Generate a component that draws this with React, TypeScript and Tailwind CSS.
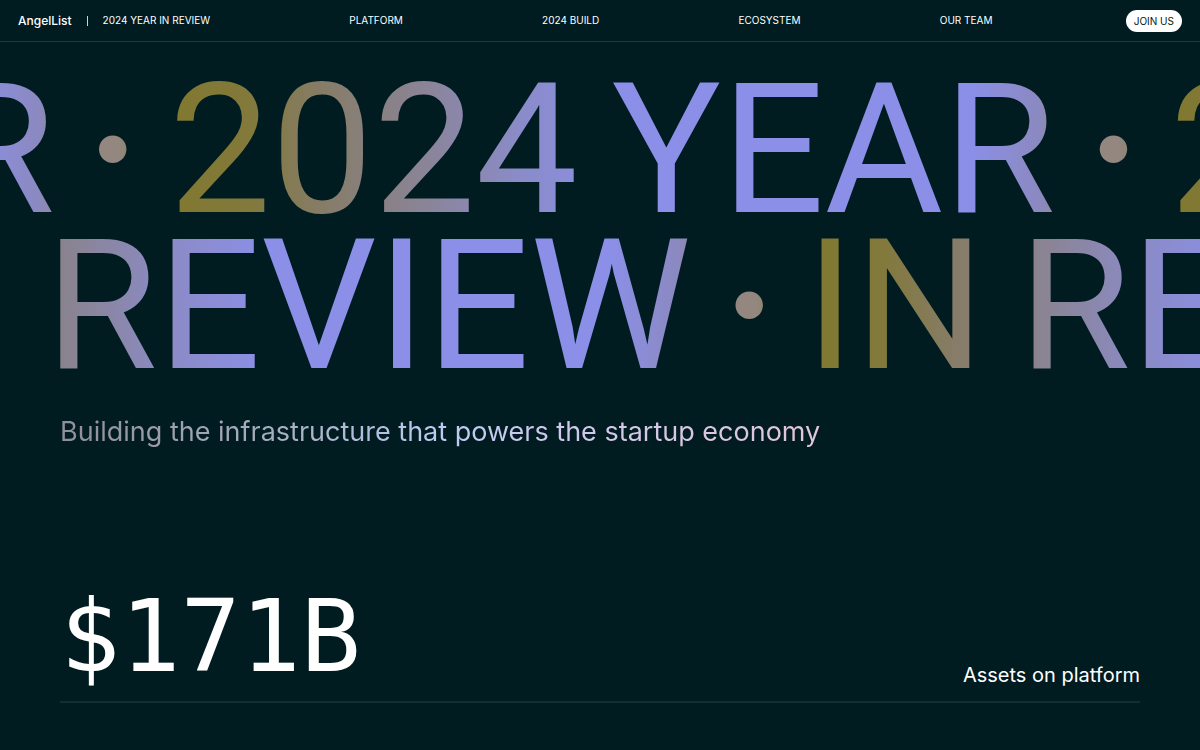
import React from 'react';

const navLinks = [
  { label: 'Platform', href: '#platform' },
  { label: '2024 Build', href: '#build' },
  { label: 'Ecosystem', href: '#ecosystem' },
  { label: 'Our Team', href: '#team' },
];

const stats = [{ value: '$171B', label: 'Assets on platform' }];

interface MarqueeRowProps {
  words: string[];
  className: string;
}

function MarqueeRow({ words, className }: MarqueeRowProps) {
  return (
    <div className="overflow-hidden">
      <div className={`flex w-max ${className}`}>
        {[0, 1, 2].map((i) => (
          <div
            key={i}
            aria-hidden={i !== 1}
            className="flex items-start gap-7 pr-[26px] whitespace-nowrap bg-clip-text text-transparent bg-[linear-gradient(90deg,#80792f_0%,#82793b_8%,#867c66_15%,#8a8390_24%,#8b8bc8_35%,#8b8fe8_45%,#8b8fe8_80%,#8b89c0_87%,#93877f_91%,#93877f_95%,#80792f_100%)]"
          >
            <span className="flex gap-[34px] font-['Roboto',sans-serif] text-[182px] leading-[156px]">
              {words.map((word) => (
                <span key={word}>{word}</span>
              ))}
            </span>
            <span className="text-[208px] leading-[146px]">·</span>
          </div>
        ))}
      </div>
    </div>
  );
}

export default function App() {
  return (
    <div className="min-h-screen bg-[#001c20] text-white font-['Inter',sans-serif] overflow-hidden">
      <header className="flex items-center justify-between h-[42px] px-[18px] border-b border-[#1d3a3c] text-[10px] uppercase">
        <div className="flex items-center">
          <a href="#home" className="text-[12px] font-medium normal-case">AngelList</a>
          <span className="w-px h-[10px] bg-white/80 mx-[15px]"></span>
          <a href="#top">2024 Year in Review</a>
        </div>
        {navLinks.map((link) => (
          <a key={link.href} href={link.href}>{link.label}</a>
        ))}
        <a href="#join" className="-ml-1.5 rounded-full bg-white text-[#001c20] px-2 leading-[22px]">Join us</a>
      </header>

      <main>
        <h1 id="top" className="pt-[30px]">
          <MarqueeRow words={['2024', 'YEAR']} className="-ml-[832px]" />
          <MarqueeRow words={['IN', 'REVIEW']} className="-ml-[168px]" />
        </h1>

        <section className="px-[60px]">
          <p className="w-fit mt-7 text-[27px] leading-[40px] bg-clip-text text-transparent bg-[linear-gradient(90deg,#908f98_0%,#a9b0c4_30%,#bccbf2_50%,#cfc8ee_65%,#e2c6da_100%)]">
            Building the infrastructure that powers the startup economy
          </p>

          {stats.map((stat) => (
            <div
              key={stat.label}
              id="platform"
              className="flex items-end justify-between mt-[133px] pb-3 border-b-2 border-[#142f31]"
            >
              <p className="font-['DejaVu_Sans_Mono',monospace] text-[100px] leading-[104px]">{stat.value}</p>
              <p className="text-[20px] leading-[28px]">{stat.label}</p>
            </div>
          ))}
        </section>
      </main>
    </div>
  );
}
